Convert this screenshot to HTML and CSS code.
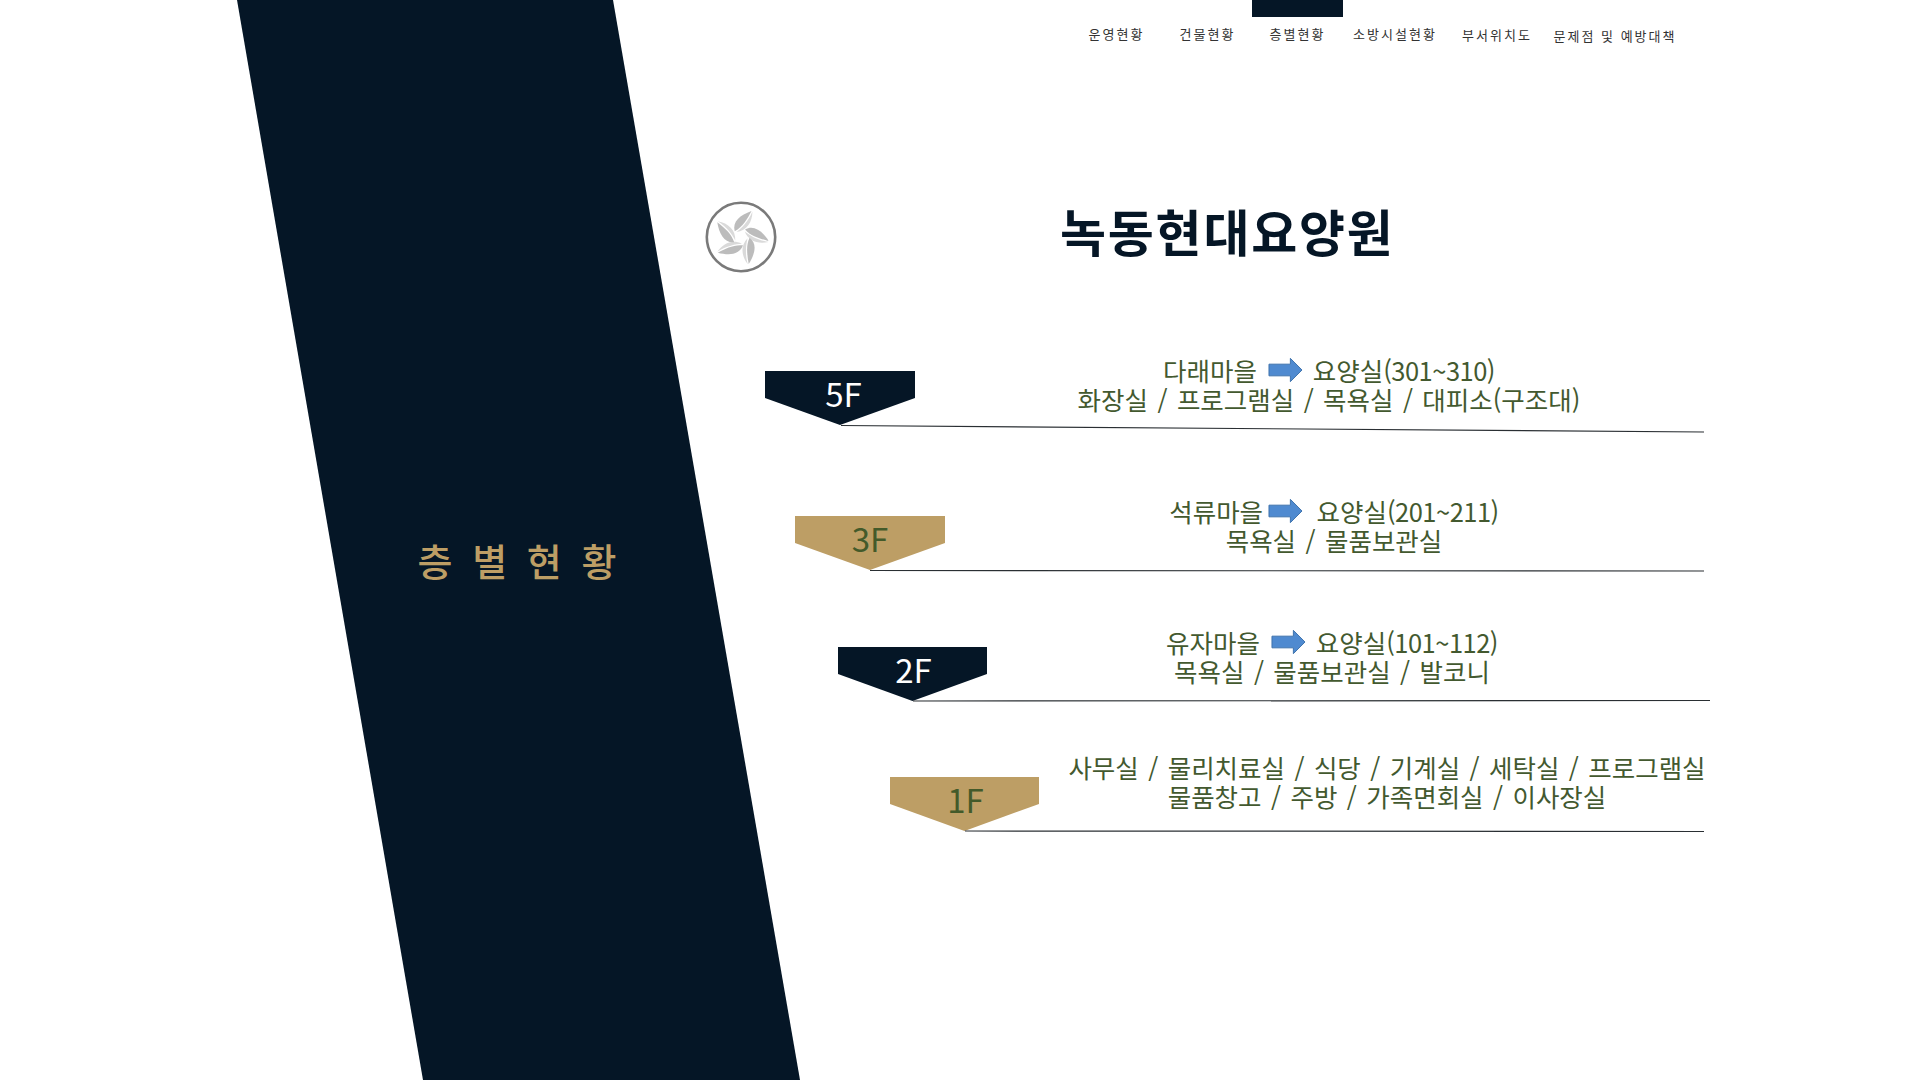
FILE: index.html
```html
<!DOCTYPE html>
<html lang="ko">
<head>
<meta charset="utf-8">
<title>층별현황</title>
<link rel="stylesheet" href="styles.css">
</head>
<body>
<div class="slide">
  <aside class="band"><span class="band-title">층 별 현 황</span></aside>
  <nav class="nav">
    <a class="nav-item w91">운영현황</a>
    <a class="nav-item w91">건물현황</a>
    <a class="nav-item w91 active">층별현황</a>
    <a class="nav-item w102">소방시설현황</a>
    <a class="nav-item w102 low1">부서위치도</a>
    <a class="nav-item w134 low2">문제점 및 예방대책</a>
  </nav>
  <header class="head">
    <svg class="logo" viewBox="0 0 72 72" aria-hidden="true">
      <defs>
        <g id="leaf">
          <path d="M-8-3C-14-11-9-20 0-28-1-19-2-10-8-3Z" fill="#bcbcbc"/>
          <path d="M-6-3C-3-8 1-17 1-28 5-18 3-8-6-3Z" fill="#dadada"/>
        </g>
      </defs>
      <circle cx="36" cy="36" r="34.2" fill="none" stroke="#7a7a7a" stroke-width="2.6"/>
      <g transform="translate(36 36)">
        <use href="#leaf" transform="rotate(22)"/>
        <use href="#leaf" transform="rotate(98)"/>
        <use href="#leaf" transform="rotate(164)"/>
        <use href="#leaf" transform="rotate(236)"/>
        <use href="#leaf" transform="rotate(302)"/>
      </g>
    </svg>
    <h1 class="title">녹동현대요양원</h1>
  </header>
  <main class="floors">
    <section class="floor f5">
      <div class="flag dark">5F</div>
      <div class="info">
        <p>다래마을 <svg class="arrow" viewBox="0 0 36 26" aria-hidden="true"><path d="M1 7H23V1L35 13 23 25V19H1Z" fill="#4f8ad0" stroke="#3d72ab" stroke-width="1"/></svg> 요양실<span class="num">(301~310)</span></p>
        <p>화장실 / 프로그램실 / 목욕실 / 대피소(구조대)</p>
      </div>
    </section>
    <section class="floor f3">
      <div class="flag gold">3F</div>
      <div class="info">
        <p>석류마을<svg class="arrow tight" viewBox="0 0 36 26" aria-hidden="true"><path d="M1 7H23V1L35 13 23 25V19H1Z" fill="#4f8ad0" stroke="#3d72ab" stroke-width="1"/></svg> 요양실<span class="num">(201~211)</span></p>
        <p>목욕실 / 물품보관실</p>
      </div>
    </section>
    <section class="floor f2">
      <div class="flag dark">2F</div>
      <div class="info">
        <p>유자마을 <svg class="arrow" viewBox="0 0 36 26" aria-hidden="true"><path d="M1 7H23V1L35 13 23 25V19H1Z" fill="#4f8ad0" stroke="#3d72ab" stroke-width="1"/></svg> 요양실<span class="num">(101~112)</span></p>
        <p>목욕실 / 물품보관실 / 발코니</p>
      </div>
    </section>
    <section class="floor f1">
      <div class="flag gold">1F</div>
      <div class="info">
        <p>사무실 / 물리치료실 / 식당 / 기계실 / 세탁실 / 프로그램실</p>
        <p>물품창고 / 주방 / 가족면회실 / 이사장실</p>
      </div>
    </section>
  </main>
  <svg class="rules" viewBox="0 0 1920 1080" aria-hidden="true">
    <line x1="841" y1="425.5" x2="1704" y2="432"/>
    <line x1="870" y1="570.5" x2="1704" y2="571"/>
    <line x1="913" y1="701" x2="1710" y2="700.5"/>
    <line x1="965" y1="831" x2="1704" y2="831.5"/>
  </svg>
</div>
</body>
</html>
```
FILE: styles.css
```css
* { box-sizing: border-box; }
html, body { margin: 0; background: #fff; }
body {
  font-family: "Noto Sans CJK KR", sans-serif;
  overflow: hidden;
}
.slide {
  position: relative;
  width: 1920px;
  height: 1080px;
  overflow: hidden;
  display: flex;
  flex-direction: column;
}
.band {
  position: absolute;
  left: 237px;
  top: 0;
  width: 563px;
  height: 1080px;
  background: #051626;
  clip-path: polygon(0 0, 376px 0, 563px 100%, 186px 100%);
  display: flex;
  align-items: center;
  justify-content: center;
}
.band-title {
  color: #bd9e65;
  font-size: 38px;
  font-weight: 500;
  line-height: 42px;
  margin-top: 40px;
  margin-right: 3px;
  word-spacing: 9px;
  white-space: nowrap;
}
.nav {
  display: flex;
  margin-left: 1071px;
  height: 50px;
  font-size: 13px;
  letter-spacing: 2px;
  color: #333;
}
.nav-item {
  border-top: 17px solid transparent;
  padding-top: 8px;
  line-height: 18px;
  text-align: center;
  white-space: nowrap;
}
.nav-item.active { border-top-color: #051626; margin-left: -1px; margin-right: 1px; }
.w91 { width: 91px; }
.w102 { width: 102px; }
.w134 { width: 134px; }
.low1 { padding-top: 9px; }
.low2 { padding-top: 10px; }
.head {
  display: flex;
  align-items: center;
  height: 90px;
  margin-top: 142px;
  padding-left: 705px;
}
.logo { width: 72px; height: 72px; display: block; }
.title {
  margin: -14px 0 0 283px;
  font-size: 50px;
  line-height: 60px;
  font-weight: 700;
  letter-spacing: 1.8px;
  color: #051626;
  white-space: nowrap;
}
.floors {
  margin-top: 73px;
  display: grid;
  grid-template-rows: 141px 131px 125px auto;
}
.floor { display: flex; align-items: flex-start; }
.flag {
  width: 150px;
  height: 54px;
  clip-path: polygon(0 0, 100% 0, 100% 27px, 50% 100%, 0 27px);
  display: flex;
  justify-content: center;
  font-size: 33px;
  line-height: 44px;
  flex: none;
}
.flag.dark { background: #051626; color: #fff; }
.flag.gold { background: #bd9e65; color: #435a2a; }
.info {
  width: 660px;
  color: #43592f;
  font-size: 25.5px;
  line-height: 29px;
  word-spacing: 2.3px;
  text-align: center;
  flex: none;
}
.info p { margin: 0; white-space: nowrap; }
.num { letter-spacing: -0.5px; }
.arrow {
  width: 35px;
  height: 26px;
  margin-left: 2px;
  vertical-align: -2px;
}
.arrow.tight { margin: 0 4px 0 5px; }
.f5 { padding-left: 765px; }
.f5 .flag { margin-top: 16px; padding-left: 7px; }
.f5 .info { margin-left: 84px; }
.f3 { padding-left: 795px; }
.f3 .flag { margin-top: 20px; }
.f3 .info { margin-left: 59px; }
.f2 { padding-left: 838px; }
.f2 .flag { margin-top: 20px; width: 149px; padding-left: 2px; }
.f2 .info { margin-left: 15px; }
.f1 { padding-left: 890px; }
.f1 .flag { margin-top: 25px; width: 149px; padding-left: 2px; }
.f1 .info { margin-left: 18px; }
.rules {
  position: absolute;
  left: 0;
  top: 0;
  width: 1920px;
  height: 1080px;
  pointer-events: none;
}
.rules line { stroke: #2a2f33; stroke-width: 1.2; }
```
